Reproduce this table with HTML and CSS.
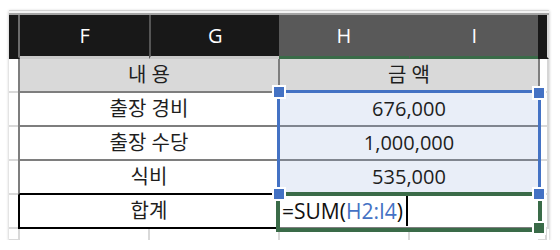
FILE: index.html
```html
<!DOCTYPE html>
<html lang="ko">
<head>
<meta charset="utf-8">
<link rel="stylesheet" href="styles.css">
</head>
<body>
<div class="window">
  <div class="topbar"></div>
  <div class="sheet">
    <div class="row head">
      <div class="c e hc"></div>
      <div class="c col hc">F</div>
      <div class="c col hc sepl">G</div>
      <div class="c col hc sel">H</div>
      <div class="c col hc sel">I</div>
      <div class="c j hc"></div>
    </div>
    <div class="row">
      <div class="c e"></div>
      <div class="c fg gray">내 용</div>
      <div class="c hi gray">금 액</div>
      <div class="c j"></div>
    </div>
    <div class="row">
      <div class="c e"></div>
      <div class="c fg">출장 경비</div>
      <div class="c hi blue">676,000</div>
      <div class="c j"></div>
    </div>
    <div class="row">
      <div class="c e"></div>
      <div class="c fg">출장 수당</div>
      <div class="c hi blue">1,000,000</div>
      <div class="c j"></div>
    </div>
    <div class="row">
      <div class="c e"></div>
      <div class="c fg above-total">식비</div>
      <div class="c hi blue">535,000</div>
      <div class="c j"></div>
    </div>
    <div class="row">
      <div class="c e"></div>
      <div class="c fg total">합계</div>
      <div class="c hi edit"><span class="formula">=SUM(<span class="ref">H2:I4</span>)</span><span class="caret"></span></div>
      <div class="c j"></div>
    </div>
    <div class="row last">
      <div class="c e"></div>
      <div class="c plain"></div>
      <div class="c plain"></div>
      <div class="c plain"></div>
      <div class="c plain"></div>
      <div class="c j"></div>
    </div>

    <div class="range"></div>
    <div class="editbox"></div>
    <div class="handle h-tl"></div>
    <div class="handle h-tr"></div>
    <div class="handle h-bl"></div>
    <div class="handle h-br"></div>
    <div class="handle green h-gbr"></div>
  </div>
</div>
</body>
</html>
```

FILE: styles.css
```css
* { box-sizing: border-box; }
html, body { margin: 0; padding: 0; background: #ffffff; }
body { padding: 10px 0 0 9px; }

.window {
  width: 540px;
  height: 230px;
  overflow: hidden;
  background: #fff;
  box-shadow: 0 1px 3px rgba(0,0,0,0.28);
  font-family: "Open Sans", "Noto Sans CJK KR", sans-serif;
  color: #1e1e1e;
}

.topbar {
  height: 5px;
  border-top: 1px solid #d2d2d2;
  border-bottom: 2px solid #a4a4a4;
  background: #f3f3f3;
}

.sheet { position: relative; }

.row { display: flex; height: 34px; }
.row.head { height: 44px; }
.row.last { height: 12px; }

.c {
  display: flex;
  align-items: center;
  justify-content: center;
  font-size: 20px;
  line-height: 1;
}

.e { width: 9px; border-bottom: 2px solid #d9d9d9; }
.j { width: 9px; border-bottom: 2px solid #d9d9d9; border-right: 2px solid #d6d6d6; }

/* header */
.hc { background: #181818; color: #fff; border-bottom: 2px solid #181818; }
.head .e { border-right: 2px solid #6c6c6c; width: 11px; }
.head .j { width: 11px; }
.col { width: 130px; border-bottom: 3px solid #c9c9c9; padding-top: 1px; font-size: 20px; }
.head .col:first-of-type { width: 128px; }
.sepl { border-left: 2px solid #555; }
.col.sel { background: #595959; border-bottom: 3px solid #3a6b48; }
.head .sel + .sel { border-left: 2px solid #595959; }

/* body */
.fg {
  width: 260px;
  border-left: 2px solid #7e7e7e;
  border-bottom: 2px solid #7e7e7e;
}
.hi {
  width: 262px;
  border-left: 2px solid #7e7e7e;
  border-right: 2px solid #7e7e7e;
  border-bottom: 2px solid #7e7e7e;
}
.gray { background: #d9d9d9; }
.blue { background: #e9eef8; border-bottom-color: #80858f; }

.above-total { border-bottom-color: #000; }
.total { border-left-color: #000; border-bottom-color: #000; }

.edit {
  justify-content: flex-start;
  padding-left: 2px;
  font-size: 21px;
  color: #111;
}
.ref { color: #4472c4; }
.caret {
  display: inline-block;
  width: 2px;
  height: 30px;
  background: #000;
  margin-left: 3px;
}

.plain { width: 130px; border-left: 2px solid #d9d9d9; }

/* overlays */
.range {
  position: absolute;
  left: 268px;
  top: 75px;
  width: 264px;
  height: 106px;
  border: 3px solid #4472c4;
}
.editbox {
  position: absolute;
  left: 267px;
  top: 177px;
  width: 266px;
  height: 40px;
  border: 4px solid #3a6b48;
}
.handle {
  position: absolute;
  width: 14px;
  height: 14px;
  background: #4472c4;
  border: 2px solid #fff;
}
.handle.green { background: #3a6b48; }
.h-tl { left: 263px; top: 70px; }
.h-tr { left: 523px; top: 71px; }
.h-bl { left: 263px; top: 172px; }
.h-br { left: 523px; top: 172px; }
.h-gbr { left: 523px; top: 206px; }
```
